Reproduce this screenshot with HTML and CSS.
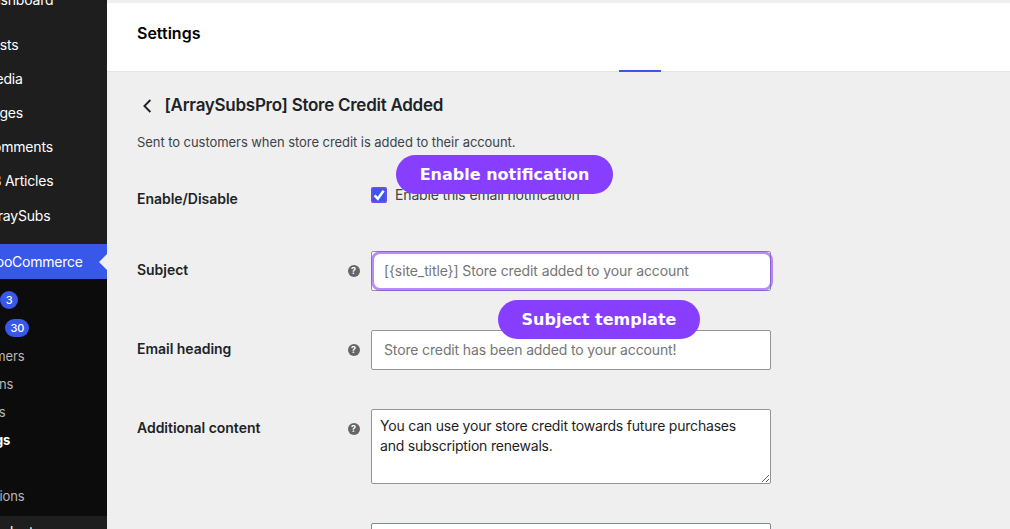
FILE: index.html
```html
<!DOCTYPE html>
<html lang="en">
<head>
    <meta charset="UTF-8">
    <meta name="viewport" content="width=device-width, initial-scale=1.0">
    <title>Settings</title>
    <link rel="stylesheet" href="styles.css">
</head>
<body>
<div class="layout">
    <nav class="sidebar">
        <ul class="menu">
            <li class="menu-item">Dashboard</li>
            <li class="menu-separator"></li>
            <li class="menu-item">Posts</li>
            <li class="menu-item">Media</li>
            <li class="menu-item">Pages</li>
            <li class="menu-item">Comments</li>
            <li class="menu-item">KB Articles</li>
            <li class="menu-item">ArraySubs</li>
            <li class="menu-separator"></li>
            <li class="menu-item current">WooCommerce</li>
        </ul>
        <ul class="submenu">
            <li>Home <span class="count">3</span></li>
            <li>Orders <span class="count">30</span></li>
            <li>Customers</li>
            <li>Coupons</li>
            <li>Reports</li>
            <li class="active">Settings</li>
            <li>Status</li>
            <li>Extensions</li>
        </ul>
        <ul class="menu">
            <li class="menu-item">Products</li>
        </ul>
    </nav>

    <main class="main">
        <header class="header">
            <h1>Settings</h1>
            <span class="tab-line"></span>
        </header>

        <div class="content">
            <h2 class="title">
                <svg class="back" width="20" height="20" viewBox="0 0 20 20"><path d="M13.4 5 7.4 11l6 6" fill="none" stroke="#1d2327" stroke-width="1.9"/></svg>
                <span>[ArraySubsPro] Store Credit Added</span>
            </h2>
            <p class="description">Sent to customers when store credit is added to their account.</p>

            <div class="form">
                <div class="form-row row-check">
                    <div class="label">Enable/Disable</div>
                    <label class="check">
                        <span class="checkbox">
                            <svg width="16" height="16" viewBox="0 0 16 16"><path d="M3.6 8.3 6.8 11.7 12.6 3.8" fill="none" stroke="#fff" stroke-width="2.5"/></svg>
                        </span>
                        <span class="check-text">Enable this email notification</span>
                    </label>
                    <span class="callout callout-enable">Enable notification</span>
                </div>

                <div class="form-row">
                    <div class="label">Subject</div>
                    <span class="help">?</span>
                    <div class="field focused">
                        <input type="text" class="input subject" placeholder="[{site_title}] Store credit added to your account">
                    </div>
                    <span class="callout callout-subject">Subject template</span>
                </div>

                <div class="form-row">
                    <div class="label">Email heading</div>
                    <span class="help">?</span>
                    <div class="field">
                        <input type="text" class="input heading" placeholder="Store credit has been added to your account!">
                    </div>
                </div>

                <div class="form-row row-area">
                    <div class="label">Additional content</div>
                    <span class="help">?</span>
                    <div class="field">
                        <textarea class="input area">You can use your store credit towards future purchases and subscription renewals.</textarea>
                    </div>
                </div>

                <div class="form-row">
                    <div class="label"></div>
                    <div class="field last">
                        <input type="text" class="input next">
                    </div>
                </div>
            </div>
        </div>
    </main>
</div>
</body>
</html>
```

FILE: styles.css
```css
* {
    box-sizing: border-box;
}
body {
    margin: 0;
    font-family: Inter, "Liberation Sans", sans-serif;
    font-size: 13px;
    color: #3c434a;
    background: #efefef;
}
h1, h2, p, ul {
    margin: 0;
    padding: 0;
}
ul {
    list-style: none;
}
.layout {
    display: flex;
    height: 529px;
    overflow: hidden;
}

/* sidebar, scrolled partly out of view */
.sidebar {
    flex: 0 0 160px;
    height: 600px;
    margin-left: -53px;
    margin-top: -16px;
    background: #1e1e1e;
}
.menu-item {
    height: 34.2px;
    line-height: 32px;
    padding-left: 36px;
    font-size: 14px;
    letter-spacing: -0.2px;
    color: #fff;
}
.menu-separator {
    height: 10.4px;
}
.menu-item.current {
    display: flex;
    justify-content: space-between;
    align-items: center;
    height: 35px;
    line-height: 35px;
    letter-spacing: -0.25px;
    background: #3858e9;
}
.menu-item.current::after {
    content: "";
    border: 8px solid transparent;
    border-right-color: #efefef;
}
.submenu {
    padding: 7px 12px 6px;
    background: #0c0c0c;
}
.submenu li {
    display: flex;
    align-items: center;
    gap: 6px;
    height: 28px;
    letter-spacing: -0.15px;
    color: #b8b8b8;
}
.submenu .active {
    color: #fff;
    font-weight: 700;
}
.count {
    min-width: 18px;
    height: 18px;
    padding: 0 5px;
    margin-left: -0.6px;
    border-radius: 9px;
    background: #3858e9;
    color: #fff;
    font-size: 11px;
    font-weight: 500;
    line-height: 18px;
    letter-spacing: 0;
    text-align: center;
}

.main {
    flex: 1;
    padding-top: 3px;
}
.header {
    display: flex;
    flex-direction: column;
    justify-content: space-between;
    height: 69px;
    padding: 20px 0 0 30px;
    background: #fff;
    border-bottom: 1px solid #e4e4e4;
}
h1 {
    font-size: 16px;
    font-weight: 600;
    line-height: 20px;
    color: #000;
}
.tab-line {
    width: 42px;
    height: 2px;
    margin-left: 482px;
    margin-bottom: -1px;
    background: #3858e9;
}
.content {
    padding: 23px 0 0 30px;
}
.title {
    display: flex;
    align-items: center;
    gap: 7.5px;
    height: 20px;
    font-size: 17px;
    font-weight: 600;
    letter-spacing: -0.27px;
    color: #1d2327;
}
.description {
    margin-top: 17px;
    line-height: 20px;
    letter-spacing: -0.06px;
}

.form {
    padding-top: 29px;
}
.form-row {
    position: relative;
    display: flex;
    height: 79px;
}
.label {
    width: 210px;
    padding-top: 9px;
    font-size: 14px;
    font-weight: 600;
    line-height: 20px;
    letter-spacing: -0.03px;
    color: #1d2327;
}
.help {
    width: 12px;
    height: 12px;
    margin: 13.5px -0.5px 0 0.5px;
    border-radius: 50%;
    background: #666;
    color: #fff;
    font-size: 9px;
    font-weight: 700;
    line-height: 12px;
    text-align: center;
}
.field {
    position: relative;
    width: 400px;
    height: 40px;
    margin-left: 12px;
}
.input {
    display: block;
    width: 100%;
    height: 40px;
    padding: 0 12px 1px;
    border: 1px solid #949494;
    border-radius: 2px;
    background: #fff;
    font-family: inherit;
    font-size: 14px;
    letter-spacing: -0.14px;
    color: #1e1e1e;
}
.input::placeholder {
    color: #757575;
}
.subject {
    letter-spacing: -0.1px;
}
.area {
    height: 75px;
    padding: 6px 8px;
    line-height: 20px;
    letter-spacing: -0.2px;
}
.last {
    margin-left: 24px;
}
.next {
    border-color: #7e8993;
}
/* highlight ring over the field */
.focused::after {
    content: "";
    position: absolute;
    inset: 0 -1.5px 0 0;
    border: 3px solid rgba(138, 63, 252, 0.6);
    border-radius: 9px;
}

.row-check {
    height: 70px;
}
.row-check .label {
    padding-top: 8px;
}
.row-area {
    height: 114px;
}
.check {
    display: flex;
    gap: 8px;
    height: 20px;
    margin: 4px 0 0 24px;
    font-size: 14px;
    line-height: 20px;
    letter-spacing: -0.15px;
}
.checkbox {
    width: 16px;
    height: 16px;
    margin-top: 2px;
    border: 2px solid #6a4bf0;
    border-radius: 2px;
    background: #3858e9;
}
.checkbox svg {
    display: block;
    margin: -2px;
}

/* callouts over the form */
.callout {
    position: absolute;
    z-index: 2;
    height: 39px;
    border-radius: 20px;
    background: #873eff;
    color: #fff;
    font-family: "DejaVu Sans", sans-serif;
    font-size: 16px;
    font-weight: 700;
    line-height: 39px;
    text-align: center;
}
.callout-enable {
    left: 259px;
    top: -26px;
    width: 217px;
}
.callout-subject {
    left: 361px;
    top: 49px;
    width: 202px;
}
```
